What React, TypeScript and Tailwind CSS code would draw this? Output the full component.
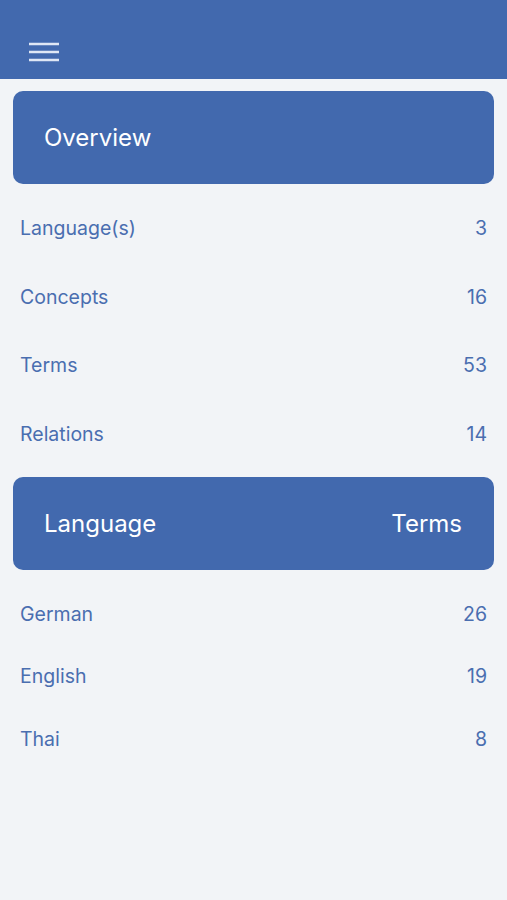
export default function App() {
  const overview = [
    { label: "Language(s)", value: 3 },
    { label: "Concepts", value: 16 },
    { label: "Terms", value: 53 },
    { label: "Relations", value: 14 },
  ];
  const languages = [
    { label: "German", value: 26 },
    { label: "English", value: 19 },
    { label: "Thai", value: 8 },
  ];

  return (
    <div className="min-h-[900px] bg-[#f2f4f7] font-['Inter',sans-serif]">
      {/* Top bar */}
      <div className="h-[79px] bg-[#4269ae] flex items-end pb-[17px] pl-[29px]">
        <svg width="30" height="20" viewBox="0 0 30 20" className="text-[#dfe7f5]">
          <line x1="0" y1="2" x2="30" y2="2" stroke="currentColor" strokeWidth="2.5" strokeLinecap="round" />
          <line x1="0" y1="10" x2="30" y2="10" stroke="currentColor" strokeWidth="2.5" strokeLinecap="round" />
          <line x1="0" y1="18" x2="30" y2="18" stroke="currentColor" strokeWidth="2.5" strokeLinecap="round" />
        </svg>
      </div>

      <div className="px-[13px] pt-[12px]">
        <div className="h-[93px] rounded-[10px] bg-[#4269ae] flex items-center px-[31px]">
          <span className="text-[24px] text-white">Overview</span>
        </div>

        <div className="pt-[10px] pb-[9px]">
          {overview.map((r) => (
            <div key={r.label} className="h-[68.5px] flex items-center justify-between px-[7px] pt-[1px] text-[19.5px] text-[#4a6eb0]">
              <span>{r.label}</span>
              <span>{r.value}</span>
            </div>
          ))}
        </div>

        <div className="h-[93px] rounded-[10px] bg-[#4269ae] flex items-center justify-between pl-[31px] pr-[32px] text-[24px] text-white">
          <span>Language</span>
          <span>Terms</span>
        </div>

        <div className="pt-[12px]">
          {languages.map((r) => (
            <div key={r.label} className="h-[62.7px] flex items-center justify-between px-[7px] pt-[2px] text-[19.5px] text-[#4a6eb0]">
              <span>{r.label}</span>
              <span>{r.value}</span>
            </div>
          ))}
        </div>
      </div>
    </div>
  );
}
